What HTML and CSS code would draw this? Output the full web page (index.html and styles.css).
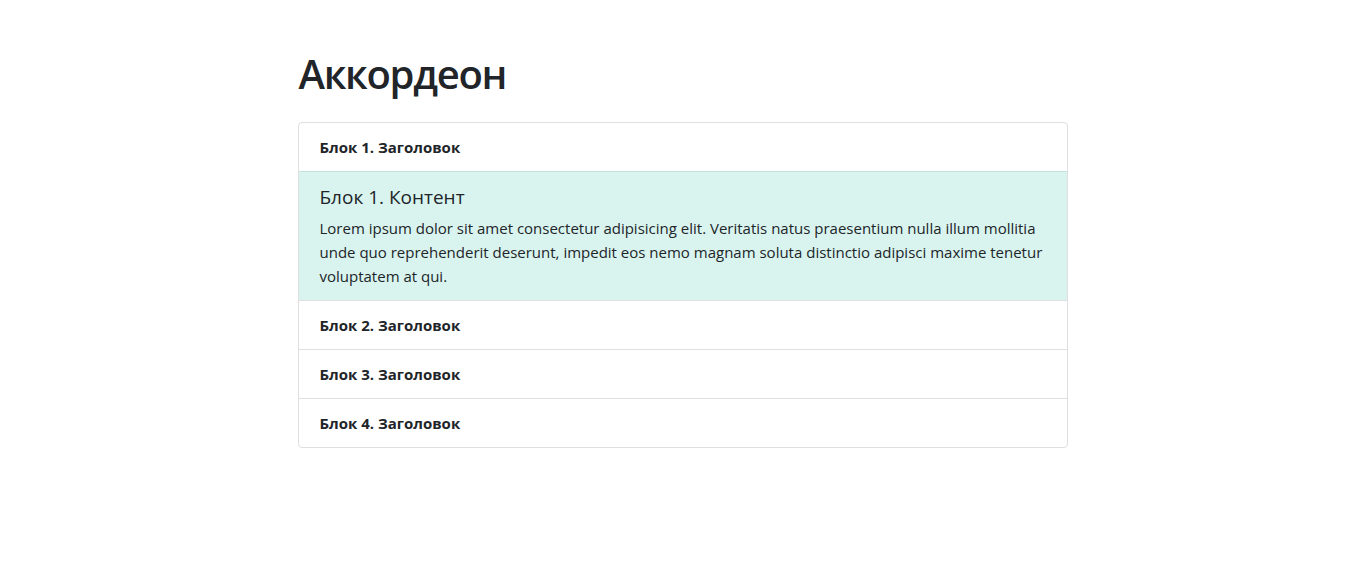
FILE: index.html
```html
<!DOCTYPE html>
<html lang="ru">
<head>
<meta charset="utf-8">
<title>Аккордеон</title>
<link rel="stylesheet" href="styles.css">
</head>
<body>
<main class="container">
  <h1 class="title">Аккордеон</h1>
  <div class="accordion">
    <div class="item">
      <div class="item-header">Блок 1. Заголовок</div>
      <div class="item-body">
        <h5 class="body-title">Блок 1. Контент</h5>
        <p class="body-text">Lorem ipsum dolor sit amet consectetur adipisicing elit. Veritatis natus praesentium nulla illum mollitia unde quo reprehenderit deserunt, impedit eos nemo magnam soluta distinctio adipisci maxime tenetur voluptatem at qui.</p>
      </div>
    </div>
    <div class="item">
      <div class="item-header">Блок 2. Заголовок</div>
    </div>
    <div class="item">
      <div class="item-header">Блок 3. Заголовок</div>
    </div>
    <div class="item">
      <div class="item-header">Блок 4. Заголовок</div>
    </div>
  </div>
</main>
</body>
</html>
```
FILE: styles.css
```css
* { box-sizing: border-box; }
html, body { margin: 0; padding: 0; background: #fff; }
body {
  font-family: "Open Sans", "Noto Sans", "Liberation Sans", sans-serif;
  font-size: 16px;
  line-height: 1.5;
  color: #212529;
}
.container {
  width: 770px;
  margin-left: calc(50% - 377px);
  padding-top: 50px;
}
.title {
  margin: 0 0 24px 1px;
  font-size: 40px;
  font-weight: 600;
  line-height: 1.2;
  letter-spacing: -1.3px;
}
.accordion {
  border: 1px solid #dfdfdf;
  border-radius: 4px;
  overflow: hidden;
}
.item + .item { border-top: 1px solid #dfdfdf; }
.item-header {
  padding: 12px 20px 12px 21px;
  font-size: 15px;
  font-weight: 700;
  line-height: 24px;
}
.item-body {
  background: #d9f4ef;
  border-top: 1px solid #c3e2dc;
  padding: 12px 20px 12px 21px;
}
.body-title {
  margin: 0 0 6px;
  font-size: 19px;
  font-weight: 500;
  line-height: 26px;
}
.body-text {
  margin: 0;
  font-size: 15px;
  line-height: 24px;
}
```
